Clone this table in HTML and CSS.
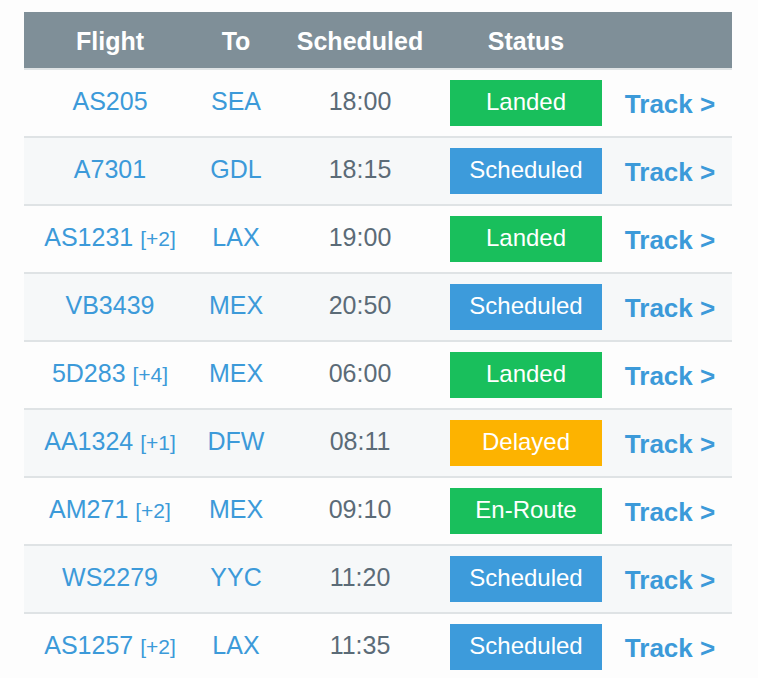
FILE: index.html
```html
<!DOCTYPE html>
<html>
<head>
<meta charset="utf-8">
<link rel="stylesheet" href="styles.css">
</head>
<body>
<table class="flights">
  <colgroup>
    <col class="c-flight"><col class="c-to"><col class="c-time"><col class="c-status"><col class="c-track">
  </colgroup>
  <thead>
    <tr><th>Flight</th><th>To</th><th>Scheduled</th><th>Status</th><th></th></tr>
  </thead>
  <tbody>
    <tr><td class="link">AS205</td><td class="link">SEA</td><td class="time">18:00</td><td class="badge-cell"><span class="badge green">Landed</span></td><td class="track">Track &gt;</td></tr>
    <tr><td class="link">A7301</td><td class="link">GDL</td><td class="time">18:15</td><td class="badge-cell"><span class="badge blue">Scheduled</span></td><td class="track">Track &gt;</td></tr>
    <tr><td class="link">AS1231 <span class="extra">[+2]</span></td><td class="link">LAX</td><td class="time">19:00</td><td class="badge-cell"><span class="badge green">Landed</span></td><td class="track">Track &gt;</td></tr>
    <tr><td class="link">VB3439</td><td class="link">MEX</td><td class="time">20:50</td><td class="badge-cell"><span class="badge blue">Scheduled</span></td><td class="track">Track &gt;</td></tr>
    <tr><td class="link">5D283 <span class="extra">[+4]</span></td><td class="link">MEX</td><td class="time">06:00</td><td class="badge-cell"><span class="badge green">Landed</span></td><td class="track">Track &gt;</td></tr>
    <tr><td class="link">AA1324 <span class="extra">[+1]</span></td><td class="link">DFW</td><td class="time">08:11</td><td class="badge-cell"><span class="badge yellow">Delayed</span></td><td class="track">Track &gt;</td></tr>
    <tr><td class="link">AM271 <span class="extra">[+2]</span></td><td class="link">MEX</td><td class="time">09:10</td><td class="badge-cell"><span class="badge green">En-Route</span></td><td class="track">Track &gt;</td></tr>
    <tr><td class="link">WS2279</td><td class="link">YYC</td><td class="time">11:20</td><td class="badge-cell"><span class="badge blue">Scheduled</span></td><td class="track">Track &gt;</td></tr>
    <tr><td class="link">AS1257 <span class="extra">[+2]</span></td><td class="link">LAX</td><td class="time">11:35</td><td class="badge-cell"><span class="badge blue">Scheduled</span></td><td class="track">Track &gt;</td></tr>
  </tbody>
</table>
</body>
</html>
```
FILE: styles.css
```css
html, body {
  margin: 0;
  padding: 0;
  background: #fdfdfd;
}
body {
  padding: 12px 26px 0 24px;
  font-family: "Liberation Sans", Arial, sans-serif;
}
.flights {
  width: 708px;
  border-collapse: collapse;
  table-layout: fixed;
}
.c-flight { width: 172px; }
.c-to { width: 80px; }
.c-time { width: 168px; }
.c-status { width: 164px; }
.c-track { width: 124px; }

.flights th {
  background: #7f8f98;
  color: #ffffff;
  font-weight: bold;
  font-size: 25px;
  height: 54px;
  padding: 2px 0 0;
  text-align: center;
  vertical-align: middle;
  border-bottom: 2px solid #dfe3e5;
}
.flights td {
  height: 63px;
  padding: 0 0 3px;
  text-align: center;
  vertical-align: middle;
  font-size: 25px;
  border-bottom: 2px solid #dfe3e5;
}
.flights tbody tr:nth-child(even) td {
  background: #f6f8f9;
}
.link { color: #3c9ad9; }
.extra { font-size: 21px; }
.time { color: #5b6b77; }
.flights td.badge-cell {
  height: 66px;
  padding: 0;
}
.badge {
  display: block;
  width: 152px;
  height: 46px;
  line-height: 44px;
  margin: 0 auto;
  color: #ffffff;
  font-size: 24px;
}
.green { background: #19bf5c; }
.blue { background: #3d9bdb; }
.yellow { background: #fdb300; }
.flights td.track {
  color: #3c9ad9;
  font-weight: bold;
  font-size: 26px;
  height: 64px;
  padding: 2px 0 0 0;
}
```
